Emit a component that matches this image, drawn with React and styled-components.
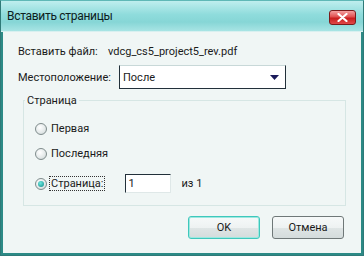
import React from "react";
import styled, { createGlobalStyle } from "styled-components";

const Global = createGlobalStyle`
  html, body { margin: 0; padding: 0; background: #f0f6f5; }
  body { font-family: Roboto, "Liberation Sans", "DejaVu Sans", sans-serif; }
`;

const Window = styled.div`
  width: 364px;
  height: 256px;
  box-sizing: border-box;
  border: 1px solid #2f7a78;
  border-top-color: #5fb8b6;
  display: flex;
  flex-direction: column;
  background: #f0f6f5;
  overflow: hidden;
`;

const TitleBar = styled.div`
  height: 30px;
  flex: none;
  display: flex;
  align-items: center;
  justify-content: space-between;
  padding: 0 7px 0 6px;
  background: linear-gradient(180deg, #bfeeee 0%, #8fdcdc 45%, #86d6d6 70%, #a8e4e4 100%);
  border-bottom: 1px solid #d8f0f0;
`;

const Title = styled.div`
  font-size: 12px;
  letter-spacing: -0.3px;
  color: #0c2020;
`;

const CloseBtn = styled.div`
  width: 27px;
  height: 15px;
  box-sizing: border-box;
  border: 1px solid #7a1a1a;
  border-radius: 3px;
  background: linear-gradient(180deg, #f4a0a0 0%, #e05050 45%, #c81e1e 55%, #e04848 100%);
  display: flex;
  align-items: center;
  justify-content: center;
  margin-top: 3px;
`;

const Body = styled.div`
  flex: 1;
  display: flex;
  flex-direction: column;
  border-left: 2px solid #2c8a86;
  border-right: 2px solid #2c8a86;
  border-bottom: 2px solid #2c8a86;
  padding: 8px 16px 0 15px;
  font-size: 11px;
  color: #1a1a1a;
`;

const Row = styled.div`
  display: flex;
  align-items: center;
  height: ${(p) => p.h}px;
`;

const Label = styled.span`
  width: ${(p) => p.w}px;
  flex: none;
`;

const Select = styled.div`
  width: 167px;
  height: 24px;
  box-sizing: border-box;
  background: #fff;
  border-left: 1px solid #22303a;
  border-top: 1px solid #c8d8d8;
  border-bottom: 1px solid #22303a;
  border-right: 1px solid #22303a;
  display: flex;
  align-items: center;
  justify-content: space-between;
  padding: 0 6px 0 3px;
`;

const Group = styled.fieldset`
  margin: 2px 0 0 5px;
  width: 323px;
  height: 112px;
  box-sizing: border-box;
  border: 1px solid #d6e6e4;
  border-radius: 0;
  padding: 0 0 0 11px;
  display: flex;
  flex-direction: column;
`;

const Legend = styled.legend`
  padding: 0 2px;
  margin-left: -10px;
  font-size: 11px;
`;

const RadioRow = styled.label`
  display: flex;
  align-items: center;
  height: 25px;
  margin-top: ${(p) => p.mt || 0}px;
`;

const RadioCircle = styled.span`
  width: 12px;
  height: 12px;
  border-radius: 50%;
  box-sizing: border-box;
  border: 1px solid #7f8c8c;
  background: radial-gradient(circle at 40% 35%, #ffffff 0%, #e2e8e8 60%, #c4cccc 100%);
  margin-right: 3px;
  display: flex;
  align-items: center;
  justify-content: center;
  flex: none;
  &::after {
    content: "";
    display: ${(p) => (p.checked ? "block" : "none")};
    width: 6px;
    height: 6px;
    border-radius: 50%;
    background: radial-gradient(circle at 40% 35%, #6ee8e0, #0e8a86);
  }
`;

const RadioText = styled.span`
  outline: ${(p) => (p.focus ? "1px dotted #333" : "none")};
  padding: 0 1px;
`;

const NumInput = styled.div`
  width: 46px;
  height: 19px;
  box-sizing: border-box;
  background: #fff;
  border-left: 1px solid #22303a;
  border-top: 1px solid #22303a;
  border-right: 1px solid #dfe8e8;
  border-bottom: 1px solid #dfe8e8;
  margin-left: 21px;
  padding-left: 2px;
  display: flex;
  align-items: center;
`;

const Suffix = styled.span`
  margin-left: 10px;
`;

const Buttons = styled.div`
  display: flex;
  justify-content: flex-end;
  gap: 12px;
  margin-top: 10px;
  margin-right: 1px;
`;

const Button = styled.div`
  width: 72px;
  height: 23px;
  box-sizing: border-box;
  border-radius: 3px;
  border: 1px solid ${(p) => (p.primary ? "#3ec8bc" : "#6f7878")};
  box-shadow: ${(p) => (p.primary ? "inset 0 0 0 1px #9ee8e0" : "none")};
  background: linear-gradient(180deg, #f6f9f9 0%, #eef2f2 50%, #dfe5e5 51%, #d4dcdc 100%);
  display: flex;
  align-items: center;
  justify-content: center;
  font-size: 11px;
  color: #1a1a1a;
`;

export default function App() {
  return (
    <>
      <Global />
      <Window>
        <TitleBar>
          <Title>Вставить страницы</Title>
          <CloseBtn>
            <svg width="11" height="9" viewBox="0 0 11 9">
              <path d="M1.5 1 L9.5 8 M9.5 1 L1.5 8" stroke="#fff" strokeWidth="2.2" strokeLinecap="round" />
            </svg>
          </CloseBtn>
        </TitleBar>
        <Body>
          <Row h={22}>
            <Label w={90}>Вставить файл:</Label>
            <span>vdcg_cs5_project5_rev.pdf</span>
          </Row>
          <Row h={30}>
            <Label w={101}>Местоположение:</Label>
            <Select>
              <span>После</span>
              <svg width="9" height="5" viewBox="0 0 9 5">
                <path d="M0 0 H9 L4.5 5 Z" fill="#1a1a5a" />
              </svg>
            </Select>
          </Row>
          <Group>
            <Legend>Страница</Legend>
            <RadioRow mt={9}>
              <RadioCircle />
              <RadioText>Первая</RadioText>
            </RadioRow>
            <RadioRow>
              <RadioCircle />
              <RadioText>Последняя</RadioText>
            </RadioRow>
            <RadioRow mt={5}>
              <RadioCircle checked />
              <RadioText focus>Страница:</RadioText>
              <NumInput>1</NumInput>
              <Suffix>из 1</Suffix>
            </RadioRow>
          </Group>
          <Buttons>
            <Button primary>OK</Button>
            <Button>Отмена</Button>
          </Buttons>
        </Body>
      </Window>
    </>
  );
}
